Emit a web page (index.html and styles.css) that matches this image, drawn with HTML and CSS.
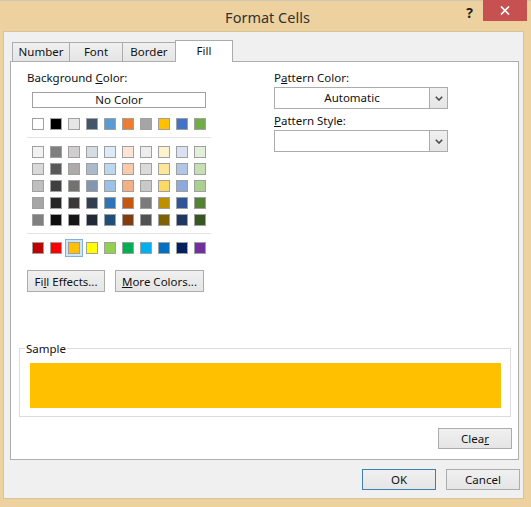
FILE: index.html
```html
<!DOCTYPE html>
<html>
<head>
    <meta charset="utf-8">
    <title>Format Cells</title>
    <link rel="stylesheet" href="styles.css">
</head>
<body>
<div class="window">
    <div class="titlebar">
        <span class="title">Format Cells</span>
        <div class="controls">
            <span class="help">?</span>
            <span class="close">
                <svg width="10" height="9" viewBox="0 0 10 9"><path d="M1 0.5 L9 8.5 M9 0.5 L1 8.5" stroke="#fff" stroke-width="1.7" fill="none"/></svg>
            </span>
        </div>
    </div>

    <div class="client">
        <div class="tabs">
            <span class="tab tab-number">Number</span>
            <span class="tab tab-font">Font</span>
            <span class="tab tab-border">Border</span>
            <span class="tab tab-fill active">Fill</span>
        </div>

        <div class="panel">
            <div class="columns">
                <div class="col-left">
                    <div class="label">Background <u>C</u>olor:</div>
                    <div class="nocolor">No Color</div>
                    <div class="swatches" id="theme"></div>
                    <div class="sep"></div>
                    <div class="swatches" id="shades"></div>
                    <div class="sep"></div>
                    <div class="swatches" id="standard"></div>
                    <div class="btnrow">
                        <button class="btn btn-effects">Fi<u>l</u>l Effects...</button>
                        <button class="btn btn-more"><u>M</u>ore Colors...</button>
                    </div>
                </div>
                <div class="col-right">
                    <div class="label">P<u>a</u>ttern Color:</div>
                    <div class="combo">
                        <span class="combo-text">Automatic</span>
                        <span class="combo-arrow"><svg width="8" height="5" viewBox="0 0 8 5"><path d="M0.8 0.8 L4 4 L7.2 0.8" stroke="#4a4a4a" stroke-width="1.6" fill="none"/></svg></span>
                    </div>
                    <div class="label label-style"><u>P</u>attern Style:</div>
                    <div class="combo">
                        <span class="combo-text"></span>
                        <span class="combo-arrow"><svg width="8" height="5" viewBox="0 0 8 5"><path d="M0.8 0.8 L4 4 L7.2 0.8" stroke="#4a4a4a" stroke-width="1.6" fill="none"/></svg></span>
                    </div>
                </div>
            </div>

            <fieldset class="sample">
                <legend>Sample</legend>
                <div class="sample-fill"></div>
            </fieldset>

            <div class="clearrow">
                <button class="btn btn-clear">Clea<u>r</u></button>
            </div>
        </div>

        <div class="footer">
            <button class="btn btn-ok">OK</button>
            <button class="btn btn-cancel">Cancel</button>
        </div>
    </div>
</div>

<script>
    // Office theme colors
    var theme = ['#FFFFFF', '#000000', '#E7E6E6', '#44546A', '#5B9BD5', '#ED7D31', '#A5A5A5', '#FFC000', '#4472C4', '#70AD47']
    var shades = [
        ['#F2F2F2', '#7F7F7F', '#D0CECE', '#D6DCE4', '#DDEBF7', '#FCE4D6', '#EDEDED', '#FFF2CC', '#D9E1F2', '#E2EFDA'],
        ['#D9D9D9', '#595959', '#AEAAAA', '#ACB9CA', '#BDD7EE', '#F8CBAD', '#DBDBDB', '#FFE699', '#B4C6E7', '#C6E0B4'],
        ['#BFBFBF', '#404040', '#757171', '#8497B0', '#9BC2E6', '#F4B084', '#C9C9C9', '#FFD966', '#8EA9DB', '#A9D08E'],
        ['#A6A6A6', '#262626', '#3A3838', '#333F4F', '#2F75B5', '#C65911', '#7B7B7B', '#BF8F00', '#2F5597', '#548235'],
        ['#808080', '#0D0D0D', '#171616', '#222A35', '#1F4E78', '#833C0C', '#525252', '#806000', '#203764', '#375623']
    ]
    var standard = ['#C00000', '#FF0000', '#FFC000', '#FFFF00', '#92D050', '#00B050', '#00B0F0', '#0070C0', '#002060', '#7030A0']

    function addRow (id, colors, selected) {
        var box = document.getElementById(id)
        for (var i = 0; i < colors.length; i++) {
            var s = document.createElement('span')
            s.className = 'swatch'
            if (i === selected) s.className += ' selected'
            s.style.background = colors[i]
            box.appendChild(s)
        }
    }

    addRow('theme', theme, -1)
    for (var r = 0; r < shades.length; r++) {
        addRow('shades', shades[r], -1)
    }
    addRow('standard', standard, 2)
</script>
</body>
</html>
```

FILE: styles.css
```css
html, body {
    margin: 0;
    padding: 0;
}
body {
    background: #EDD19E;
    font-family: "Noto Sans", "Open Sans", sans-serif;
    font-size: 11.5px;
    color: #111;
}
.window {
    width: 531px;
    height: 507px;
    border-top: 1px solid #CFC6B4;
    box-sizing: border-box;
}

/* title bar */
.titlebar {
    height: 30px;
    display: grid;
}
.title, .controls {
    grid-area: 1 / 1;
}
.title {
    justify-self: center;
    padding-top: 6px;
    padding-left: 4px;
    font-size: 14.5px;
    color: #333;
}
.controls {
    justify-self: end;
    display: flex;
    align-items: flex-start;
    margin-right: 4px;
}
.help {
    font-size: 14px;
    font-weight: bold;
    color: #222;
    margin-top: 2px;
    margin-right: 10px;
}
.close {
    width: 44px;
    height: 21px;
    margin-top: -1px;
    background: #C75050;
    display: flex;
    align-items: center;
    justify-content: center;
}

/* client area */
.client {
    margin: 0 7px 0 3px;
    height: 468px;
    box-sizing: border-box;
    background: #F0F0F0;
    border: 1px solid #D8C39A;
    padding-top: 8px;
}

.tabs {
    display: flex;
    align-items: flex-end;
    height: 21px;
    margin-left: 8px;
}
.tab {
    box-sizing: border-box;
    height: 19px;
    border: 1px solid #ACACAC;
    border-bottom: none;
    margin-right: -1px;
    background: linear-gradient(#F0F0F0, #E5E5E5);
    text-align: center;
    line-height: 18px;
}
.tab-number { width: 58px; }
.tab-font { width: 54px; }
.tab-border { width: 54px; }
.tab-fill { width: 58px; }
.tab.active {
    height: 22px;
    margin-bottom: -1px;
    background: #fff;
    position: relative;
    z-index: 1;
    line-height: 20px;
}

.panel {
    margin: 0 4px 0 6px;
    background: #fff;
    border: 1px solid #ADADAD;
    padding: 8px 0 10px 0;
}

.columns {
    display: flex;
    align-items: flex-start;
    padding-left: 16px;
}
.col-left {
    width: 247px;
}
.label {
    line-height: 15px;
    height: 15px;
}
.nocolor {
    margin: 7px 0 0 5px;
    width: 174px;
    height: 16px;
    box-sizing: border-box;
    border: 1px solid #A0A0A0;
    text-align: center;
    line-height: 14px;
}
.swatches {
    display: grid;
    grid-template-columns: repeat(10, 12px);
    column-gap: 6px;
    row-gap: 5px;
    margin-left: 5px;
}
#theme {
    margin-top: 10px;
}
#shades, #standard {
    margin-top: 8px;
}
.swatch {
    width: 12px;
    height: 12px;
    box-sizing: border-box;
    border: 1px solid #A0A0A0;
}
.swatch.selected {
    box-shadow: 0 0 0 2px #CDE3F7, 0 0 0 3px #86AEDC;
}
.sep {
    margin-top: 7px;
    width: 184px;
    height: 1px;
    background: #E3E3E3;
}

.btn {
    box-sizing: border-box;
    font-family: inherit;
    font-size: 11.5px;
    color: #111;
    background: linear-gradient(#F0F0F0, #E5E5E5);
    border: 1px solid #ACACAC;
    border-radius: 0;
    padding: 0;
    height: 21px;
    width: 74px;
}
.btnrow {
    margin-top: 16px;
    display: flex;
    gap: 10px;
}
.btn-effects {
    width: 78px;
    height: 22px;
}
.btn-more {
    width: 89px;
    height: 22px;
}

.combo {
    margin-top: 2px;
    width: 174px;
    height: 22px;
    box-sizing: border-box;
    border: 1px solid #ACACAC;
    display: flex;
}
.combo-text {
    flex: 1;
    text-align: center;
    line-height: 20px;
}
.combo-arrow {
    width: 17px;
    border-left: 1px solid #ACACAC;
    background: linear-gradient(#F0F0F0, #E5E5E5);
    display: flex;
    align-items: center;
    justify-content: center;
}
.label-style {
    margin-top: 4px;
}

/* sample */
.sample {
    margin: 49px 7px 0 8px;
    padding: 7px 9px 8px 5px;
    border: 1px solid #DCDCDC;
    min-width: 0;
}
.sample legend {
    padding: 0 1px;
    line-height: 15px;
}
.sample-fill {
    margin-left: 5px;
    height: 45px;
    background: #FFC000;
}

.clearrow {
    margin-top: 11px;
    display: flex;
    justify-content: flex-end;
    padding-right: 6px;
}

.footer {
    margin-top: 9px;
    display: flex;
    justify-content: flex-end;
    gap: 10px;
    padding-right: 3px;
}
.btn-ok {
    border-color: #3C7FB1;
}
```
